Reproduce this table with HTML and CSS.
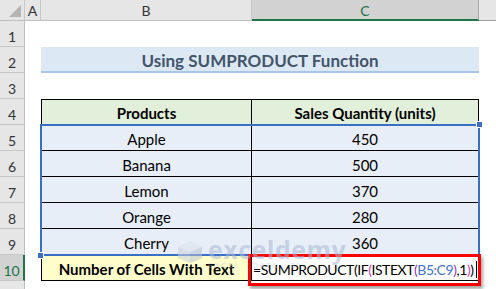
FILE: index.html
```html
<!DOCTYPE html>
<html>
<head>
<meta charset="utf-8">
<link rel="stylesheet" href="styles.css">
</head>
<body>
<div class="sheet">
  <div class="corner"><span class="tri"></span></div>
  <div class="colhead">A</div>
  <div class="colhead">B</div>
  <div class="colhead sel">C</div>
  <div class="colhead rest"></div>

  <div class="rowhead">1</div>
  <div class="blankrow"></div>

  <div class="rowhead">2</div>
  <div class="cell a"></div>
  <div class="title">Using SUMPRODUCT Function</div>
  <div class="cell"></div>

  <div class="rowhead">3</div>
  <div class="blankrow"></div>

  <div class="rowhead">4</div>
  <div class="cell a"></div>
  <div class="th b">Products</div>
  <div class="th c">Sales Quantity (units)</div>
  <div class="cell"></div>

  <div class="rowhead">5</div>
  <div class="cell a"></div>
  <div class="td b">Apple</div>
  <div class="td c">450</div>
  <div class="cell"></div>

  <div class="rowhead">6</div>
  <div class="cell a"></div>
  <div class="td b">Banana</div>
  <div class="td c">500</div>
  <div class="cell"></div>

  <div class="rowhead">7</div>
  <div class="cell a"></div>
  <div class="td b">Lemon</div>
  <div class="td c">370</div>
  <div class="cell"></div>

  <div class="rowhead">8</div>
  <div class="cell a"></div>
  <div class="td b">Orange</div>
  <div class="td c">280</div>
  <div class="cell"></div>

  <div class="rowhead">9</div>
  <div class="cell a"></div>
  <div class="td b">Cherry</div>
  <div class="td c">360</div>
  <div class="cell"></div>

  <div class="rowhead sel">10</div>
  <div class="cell a"></div>
  <div class="label">Number of Cells With Text</div>
  <div class="formula">=SUMPRODUCT<span class="p1">(</span>IF<span class="p2">(</span>ISTEXT<span class="p3">(</span><span class="ref">B5:C9</span><span class="p3">)</span>,1<span class="p2">)</span><span class="p1">)</span><span class="caret"></span></div>
  <div class="cell"></div>

  <div class="rowhead last"></div>
  <div class="blankrow"></div>

  <div class="selection"><span class="handle tr"></span><span class="handle bl"></span></div>
  <div class="redbox"></div>
  <div class="watermark">
    <svg class="wm-icon" width="28" height="24" viewBox="0 0 28 24">
      <polygon points="14,1 26,7 26,18 14,23 2,18 2,7" fill="#c8cfdc"/>
      <polygon points="14,1 26,7 14,12 2,7" fill="#dde2ea"/>
      <polygon points="14,12 26,7 26,18 14,23" fill="#b9c2d2"/>
    </svg>
    <div class="wm-text">
      <span class="wm-name">exceldemy</span>
      <span class="wm-sub">EXCEL · DATA · BI</span>
    </div>
  </div>
</div>
</body>
</html>
```
FILE: styles.css
```css
html, body {
  margin: 0;
  padding: 0;
  background: #ffffff;
}
body {
  width: 496px;
  height: 289px;
  overflow: hidden;
  font-family: "Lato", "Liberation Sans", sans-serif;
}
.sheet {
  position: relative;
  display: grid;
  grid-template-columns: 25px 16px 211px 227px 17px;
  grid-template-rows: 21px repeat(10, 26px) 8px;
  width: 496px;
  height: 289px;
  overflow: hidden;
}
.corner {
  position: relative;
  background: #e6e6e6;
  border-right: 1px solid #c8c8c8;
  border-bottom: 1px solid #bdbdbd;
  box-sizing: border-box;
}
.tri {
  position: absolute;
  right: 3px;
  bottom: 3px;
  width: 0;
  height: 0;
  border-left: 12px solid transparent;
  border-bottom: 12px solid #b4b4b4;
}
.colhead {
  background: #e6e6e6;
  border-right: 1px solid #c8c8c8;
  border-bottom: 1px solid #bdbdbd;
  box-sizing: border-box;
  display: flex;
  align-items: center;
  justify-content: center;
  font-size: 14px;
  color: #333;
  padding-top: 1px;
}
.colhead.sel {
  background: #d2d2d2;
  border-bottom: 2px solid #217346;
  border-right: 1px solid #a8a8a8;
  color: #217346;
}
.colhead.rest {
  border-right: none;
  border-bottom: 1px solid #a0a0a0;
}
.rowhead {
  grid-column: 1;
  background: #e6e6e6;
  border-right: 1px solid #bdbdbd;
  border-bottom: 1px solid #c8c8c8;
  box-sizing: border-box;
  display: flex;
  align-items: center;
  justify-content: center;
  font-size: 14px;
  color: #333;
  padding-top: 5px;
}
.rowhead.sel {
  background: #d2d2d2;
  border-right: 2px solid #217346;
  color: #217346;
}
.rowhead.last {
  border-bottom: none;
}
.blankrow {
  grid-column: 2 / 6;
}
.cell {
  box-sizing: border-box;
}
.title {
  grid-column: 3 / 5;
  background: #dce9f5;
  border-bottom: 2px solid #a7c6e6;
  box-sizing: border-box;
  display: flex;
  align-items: center;
  justify-content: center;
  font-weight: 700;
  font-size: 17px;
  color: #44546a;
  padding-top: 2px;
}
.th, .td, .label, .formula {
  box-sizing: border-box;
  display: flex;
  align-items: center;
  justify-content: center;
  font-size: 15px;
  color: #000;
  padding-top: 3px;
  border-bottom: 1px solid #000;
  border-right: 1px solid #000;
  min-width: 0;
}
.b {
  border-left: 1px solid #000;
}
.th {
  background: #e2efda;
  font-weight: 700;
  border-top: 1px solid #000;
  padding-top: 2px;
}
.td {
  background: #e8eef8;
}
.label {
  background: #ffffcc;
  border-left: 1px solid #000;
  font-weight: 700;
}
.formula {
  justify-content: flex-start;
  padding-left: 1px;
  background: #ffffff;
  font-size: 14px;
  letter-spacing: -0.45px;
  white-space: nowrap;
  overflow: hidden;
}
.p1 { color: #000; }
.p2 { color: #d43bb5; }
.p3 { color: #8a3ab9; }
.ref { color: #4472c4; }
.caret {
  display: inline-block;
  width: 1px;
  height: 17px;
  background: #000;
  margin-left: 3px;
}
.selection {
  position: absolute;
  grid-column: 3 / 5;
  grid-row: 6 / 11;
  top: -1px;
  left: -1px;
  right: -1px;
  bottom: -1px;
  border: 2px solid #3a6fc6;
  pointer-events: none;
}
.handle {
  position: absolute;
  width: 5px;
  height: 5px;
  background: #3a6fc6;
  border: 1px solid #fff;
}
.handle.tr {
  right: -5px;
  top: -5px;
}
.handle.bl {
  left: -5px;
  bottom: -5px;
}
.redbox {
  position: absolute;
  grid-column: 4 / 5;
  grid-row: 11 / 12;
  top: -1px;
  left: -4px;
  right: -2px;
  bottom: -5px;
  border: 3px solid #ff0000;
  box-shadow: 2px 3px 3px rgba(0, 0, 0, 0.35);
  pointer-events: none;
}
.watermark {
  position: absolute;
  left: 176px;
  top: 240px;
  display: flex;
  align-items: flex-start;
  gap: 4px;
  opacity: 0.55;
  pointer-events: none;
}
.wm-text {
  display: flex;
  flex-direction: column;
  line-height: 1;
}
.wm-name {
  font-family: "Open Sans", "Liberation Sans", sans-serif;
  font-weight: 700;
  font-size: 25px;
  color: #a9b8d4;
  letter-spacing: 0.5px;
  margin-top: -3px;
}
.wm-sub {
  font-family: "Liberation Sans", sans-serif;
  font-size: 7px;
  letter-spacing: 2px;
  color: #b9c3d4;
  margin-top: 0px;
}
```
